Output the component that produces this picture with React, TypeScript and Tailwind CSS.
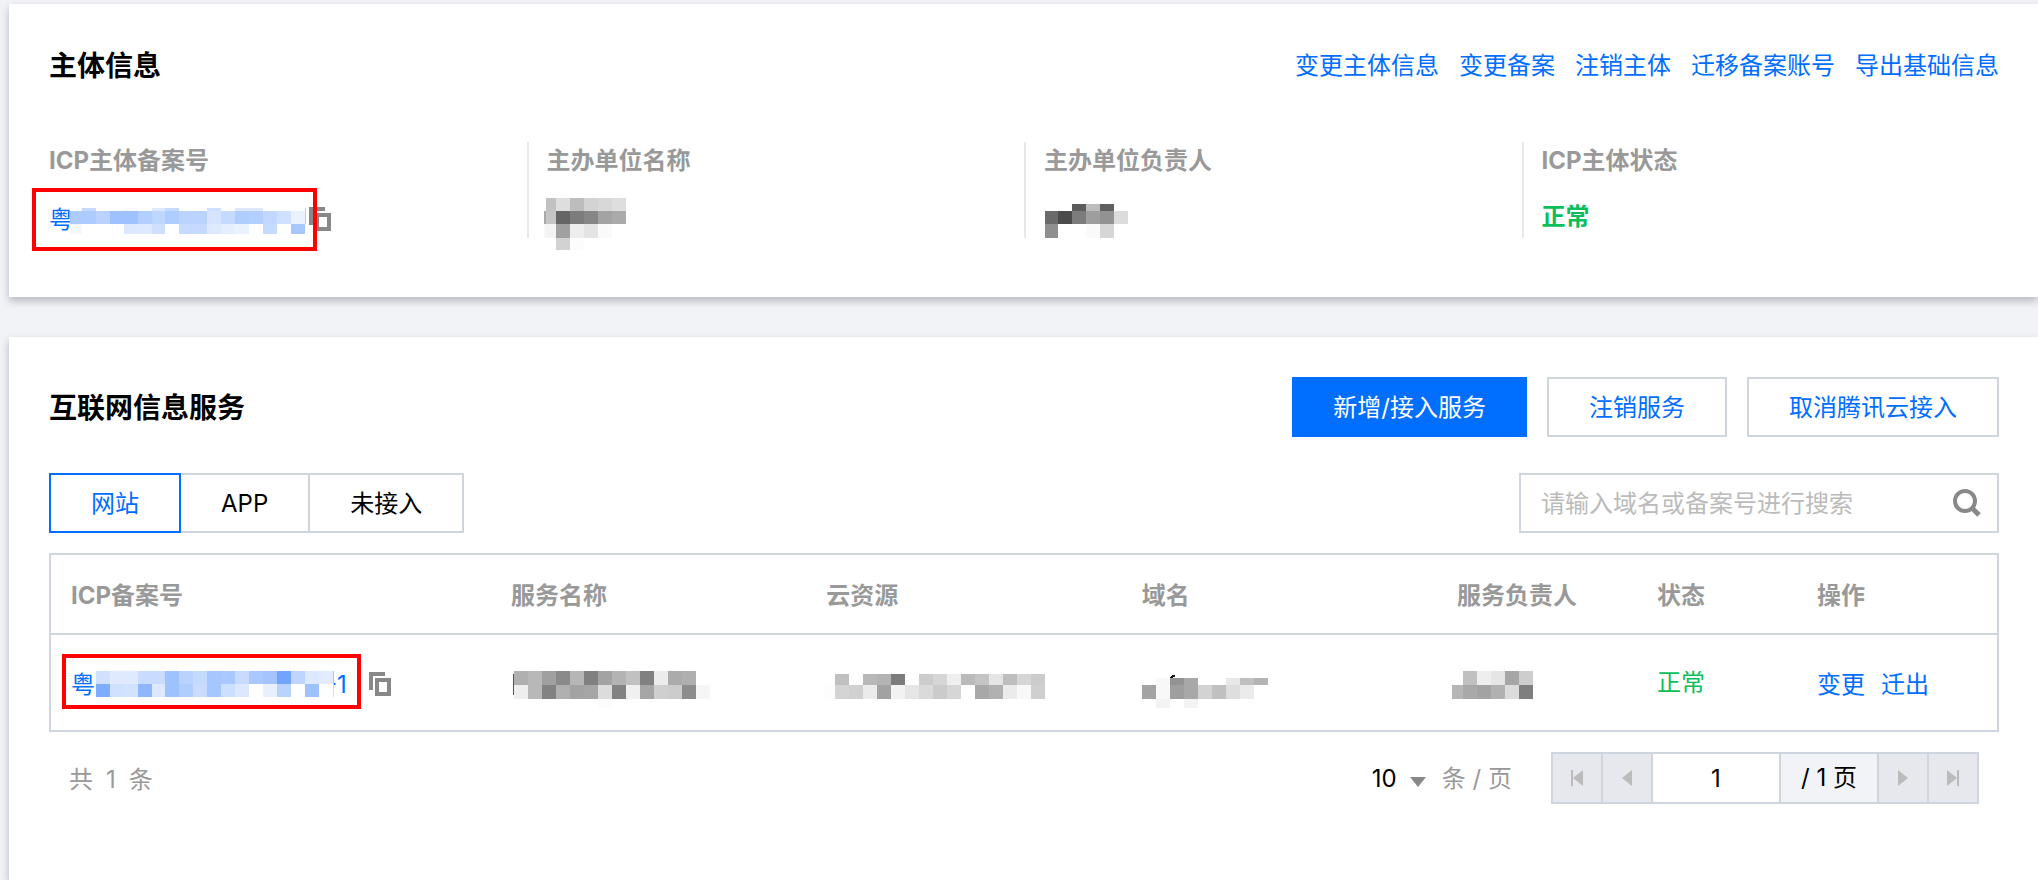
import { useState, type ReactNode } from "react";

type Cells = (string | null)[][];

interface MosaicProps {
  xs: number[];
  ys: number[];
  cells: Cells;
  height: number;
  className?: string;
  children?: ReactNode;
}

/* Pixelated block that hides private data. xs / ys are the cell edges. */
function Mosaic({ xs, ys, cells, height, className = "", children }: MosaicProps) {
  const width = xs[xs.length - 1];
  return (
    <svg
      aria-hidden="true"
      width={width}
      height={height}
      viewBox={`0 0 ${width} ${height}`}
      shapeRendering="crispEdges"
      className={`block shrink-0 overflow-visible ${className}`}
    >
      {cells.map((row, r) =>
        row.map((fill, c) =>
          fill ? (
            <rect
              key={`${r}-${c}`}
              x={xs[c]}
              y={ys[r]}
              width={xs[c + 1] - xs[c]}
              height={ys[r + 1] - ys[r]}
              fill={fill}
            />
          ) : null,
        ),
      )}
      {children}
    </svg>
  );
}

const edges = (first: number[], start: number, count: number) => [
  ...first,
  ...Array.from({ length: count + 1 }, (_, i) => start + i * 14),
];

const _ = null;

function CopyButton({ className = "" }: { className?: string }) {
  return (
    <button type="button" aria-label="复制" className={`mt-[2px] shrink-0 cursor-pointer ${className}`}>
      <svg width="22" height="24" viewBox="0 0 22 24" fill="#888888" shapeRendering="crispEdges" className="block">
        <path d="M0 0h16v4H4v14H0z" />
        <path fillRule="evenodd" d="M6 6h16v18H6zM10 10v10h8V10z" />
      </svg>
    </button>
  );
}

function Field({ label, children, divided = true }: { label: string; children: ReactNode; divided?: boolean }) {
  return (
    <div className={`min-h-[95px] px-[18px] border-l-2 ${divided ? "border-[#e7e8ee]" : "border-transparent"}`}>
      <dt className="font-bold leading-[38px] text-[#999999]">{label}</dt>
      <dd className="mt-[18px]">{children}</dd>
    </div>
  );
}

const subjectLinks = ["变更主体信息", "变更备案", "注销主体", "迁移备案账号", "导出基础信息"];
const tabs = ["网站", "APP", "未接入"];

function SubjectCard() {
  return (
    <section className="bg-white pl-10 pr-[39px] pt-10 pb-[59px] shadow-[0_4px_8px_rgba(54,58,80,0.32)]">
      <header className="flex flex-wrap items-center justify-between gap-4">
        <h2 className="text-[28px] leading-[44px] font-bold">主体信息</h2>
        <nav className="flex flex-wrap gap-5 text-[#006eff]">
          {subjectLinks.map((t) => (
            <a key={t} href="#">{t}</a>
          ))}
        </nav>
      </header>
      <dl className="-mx-5 mt-[54px] grid grid-cols-4">
        <Field label="ICP主体备案号" divided={false}>
          <div className="relative flex h-10 items-center">
            <a href="#" className="flex items-center text-[#006eff]">
              <span className="pt-1">粤</span>
              <Mosaic
                className="-ml-[3px] bg-white"
                height={40}
                xs={[0, 12, 26, 40, 54, 68, 82, 95, 109, 123, 137, 151, 165, 179, 193, 207, 221, 235]}
                ys={[10, 13, 26, 36]}
                cells={[
                  [_, "#c5d9ff", _, _, "#f8faff", _, "#dce8ff", "#c5daff", _, _, "#cfe0ff", _, "#dce8ff", "#dce8ff"],
                  ["#aecbff", "#aecbff", "#b9d2ff", "#9ec1ff", "#9ec1ff", "#b3cfff", "#bfd6ff", "#b0cdff", "#bbd3ff", "#bbd3ff", "#d5e5ff", "#c5daff", "#b0cdff", "#b3cfff", "#c2d8ff", "#d0e1ff", "#ebf2ff"],
                  ["#f5f8ff", _, _, _, "#dce8ff", "#dde9ff", "#cfe0ff", _, "#c5daff", "#c5daff", "#dce9ff", "#e5eeff", "#ebf2ff", _, "#c5daff", _, "#a6c8ff"],
                ]}
              >
                <rect x="235" y="10" width="1" height="16" fill="#cccccc" />
              </Mosaic>
            </a>
            <CopyButton className="ml-1" />
            <span aria-hidden="true" className="pointer-events-none absolute -top-[10px] -left-[17px] h-[63px] w-[285px] border-4 border-[#ff0000]" />
          </div>
        </Field>
        <Field label="主办单位名称">
          <Mosaic
            className="-ml-[3px]"
            height={36}
            xs={[0, 2, 12, 26, 40, 54, 68, 82]}
            ys={[0, 13, 26, 40, 52]}
            cells={[
              [_, "#c2c2c2", "#dedede", "#bdbdbd", "#d3d3d3", "#d8d8d8", "#dedede"],
              ["#a8a8a8", "#c5c5c5", "#656565", "#7c7c7c", "#868686", "#a3a3a3", "#aaaaaa"],
              ["#f8f8f8", "#f3f3f3", "#a0a0a0", "#eeeeee", "#e4e4e4", "#fafafa"],
              [_, _, "#d2d2d2", "#fcfcfc"],
            ]}
          />
        </Field>
        <Field label="主办单位负责人">
          <Mosaic
            className="ml-px"
            height={36}
            xs={[0, 13, 27, 41, 55, 69, 83]}
            ys={[6, 13, 26, 40]}
            cells={[
              [_, _, "#5c5c5c", "#bcbcbc", "#5f5f5f"],
              ["#6a6a6a", "#4b4b4b", "#7c7c7c", "#9e9e9e", "#929292", "#dcdcdc"],
              ["#8f8f8f", _, _, "#fafafa", "#d6d6d6"],
            ]}
          />
        </Field>
        <Field label="ICP主体状态">
          <p className="font-bold leading-[38px] text-[#0abf5b]">正常</p>
        </Field>
      </dl>
    </section>
  );
}

function ServiceTable() {
  const th = "h-20 border-b-2 border-[#cfd5de] px-5 pt-1 text-left font-bold text-[#999999]";
  const td = "h-[95px] px-5 align-middle";
  return (
    <table className="mt-5 w-full table-fixed border-separate border-spacing-0 border-2 border-[#cfd5de]">
      <thead>
        <tr>
          <th className={`${th} w-[440px]`}>ICP备案号</th>
          <th className={th}>服务名称</th>
          <th className={th}>云资源</th>
          <th className={th}>域名</th>
          <th className={`${th} w-[200px]`}>服务负责人</th>
          <th className={`${th} w-[160px]`}>状态</th>
          <th className={`${th} w-[200px]`}>操作</th>
        </tr>
      </thead>
      <tbody>
        <tr>
          <td className={td}>
            <div className="relative flex h-[50px] items-center">
              <a href="#" className="flex items-center text-[#006eff]">
                <span className="pt-1">粤</span>
                <Mosaic
                  className="relative z-10 ml-px bg-white"
                  height={30}
                  xs={[0, 14, 28, 42, 56, 69, 83, 97, 111, 125, 139, 153, 167, 181, 195, 209, 223, 237, 238]}
                  ys={[3, 16, 29]}
                  cells={[
                    ["#d0e1ff", "#e0eaff", "#e0eaff", "#c9dcff", "#c9dcff", "#9ec1ff", "#b9d2ff", "#c5daff", "#a6c6ff", "#a8c8ff", "#c8dbff", "#a8c8ff", "#a3c4ff", "#70a4ff", "#bdd5ff", "#dce9ff", "#e3ecff", "#a6c6ff"],
                    ["#7dadff", "#d0e1ff", "#d2e3ff", "#8fb7ff", "#dce8ff", "#9ec1ff", "#b0cdff", "#c9dcff", "#a6c6ff", "#cddfff", "#dce8ff", _, "#e8f0ff", "#b9d2ff", _, "#9ec1ff", _, "#d0e1ff"],
                  ]}
                />
                <span className="-ml-2 pt-1">-1</span>
              </a>
              <CopyButton className="ml-[22px]" />
              <span aria-hidden="true" className="pointer-events-none absolute -top-1 -left-[9px] h-[55px] w-[299px] border-4 border-[#ff0000]" />
            </div>
          </td>
          <td className={td}>
            <Mosaic
              className="ml-[2px]"
              height={50}
              xs={edges([], 1, 14)}
              ys={[13, 27, 41, 50]}
              cells={[
                ["#b0b0b0", "#b8b8b8", "#a0a0a0", "#8a8a8a", "#b6b6b6", "#808080", "#a3a3a3", "#b3b3b3", "#c1c1c1", "#808080", "#ececec", "#ababab", "#afafaf"],
                ["#eeeeee", "#b8b8b8", "#828282", "#b0b0b0", "#a3a3a3", "#a6a6a6", "#dcdcdc", "#828282", "#f0f0f0", "#a6a6a6", "#cfcfcf", "#cccccc", "#8c8c8c", "#f6f6f6"],
                [_, _, _, _, _, _, "#fcfcfc"],
              ]}
            >
              <rect x="0" y="16" width="1" height="21" fill="#555555" />
            </Mosaic>
          </td>
          <td className={td}>
            <Mosaic
              className="-ml-[2px]"
              height={50}
              xs={edges([0], 11, 15)}
              ys={[16, 27, 41]}
              cells={[
                [_, "#c0c0c0", _, "#b8b8b8", "#b3b3b3", "#7c7c7c", _, "#cccccc", "#d6d6d6", "#efefef", "#bababa", "#c4c4c4", "#e5e5e5", "#bebebe", "#d6d6d6", "#cccccc"],
                ["#fdfdfd", "#d4d4d4", "#d0d0d0", "#ebebeb", "#a2a2a2", "#f2f2f2", "#e5e5e5", "#dadada", "#cbcbcb", "#d6d6d6", _, "#a8a8a8", "#b1b1b1", "#ebebeb", "#f8f8f8", "#cfcfcf"],
              ]}
            />
          </td>
          <td className={td}>
            <Mosaic
              height={50}
              xs={edges([], 0, 9)}
              ys={[20, 27, 41, 50]}
              cells={[
                [_, "#f8f8f8", "#929292", "#a8a8a8", _, _, "#e8e8e8", "#c0c0c0", "#b4b4b4"],
                ["#a3a3a3", "#f8f8f8", "#9e9e9e", "#a8a8a8", "#d3d3d3", "#c0c0c0", "#dedede", "#ebebeb"],
                [_, "#f3f3f3", _, "#f3f3f3"],
              ]}
            >
              <path d="M28 20v-1l2-2h3v2h-2v1z" fill="#111111" />
            </Mosaic>
          </td>
          <td className={td}>
            <Mosaic
              className="-ml-[5px]"
              height={50}
              xs={edges([0], 11, 5)}
              ys={[13, 27, 41]}
              cells={[
                [_, "#c0c0c0", "#eeeeee", "#e5e5e5", "#a6a6a6", "#cdcdcd"],
                ["#b6b6b6", "#a9a9a9", "#a3a3a3", "#b1b1b1", "#dcdcdc", "#7f7f7f"],
              ]}
            />
          </td>
          <td className={`${td} text-[#0abf5b]`}>正常</td>
          <td className={td}>
            <div className="flex gap-4 pt-1 text-[#006eff]">
              <a href="#">变更</a>
              <a href="#">迁出</a>
            </div>
          </td>
        </tr>
      </tbody>
    </table>
  );
}

function PageButton({ label, d, x }: { label: string; d: string; x?: number }) {
  return (
    <button
      type="button"
      aria-label={label}
      className="-ml-[2px] flex h-[52px] w-[52px] items-center justify-center border-2 border-[#cfd5de] bg-[#e7e8ee] first:ml-0"
    >
      <svg width="12" height="16" viewBox="0 0 12 16" fill="#bbbbbb" className="block overflow-visible">
        <path d={d} />
        {x !== undefined && <rect x={x} y="0" width="2" height="16" />}
      </svg>
    </button>
  );
}

function Pagination() {
  const [page, setPage] = useState("1");
  return (
    <footer className="mt-5 flex flex-wrap items-center justify-between gap-4 px-5">
      <p className="flex gap-[13px] pt-1 text-[#999999]">
        <span>共</span>
        <span>1</span>
        <span>条</span>
      </p>
      <div className="flex flex-wrap items-center">
        <label className="flex items-center pt-[2px] text-[#999999]">
          <span className="relative flex items-center">
            <select aria-label="每页条数" defaultValue="10" className="w-[70px] appearance-none bg-transparent pl-4 text-black outline-none">
              <option>10</option>
              <option>20</option>
              <option>50</option>
            </select>
            <svg width="16" height="10" viewBox="0 0 16 10" fill="#888888" className="pointer-events-none absolute top-4 right-0">
              <path d="M0 0h16L8 10z" />
            </svg>
          </span>
          <span className="ml-4">条 / 页</span>
        </label>
        <div className="ml-[39px] flex">
          <PageButton label="首页" d="M12 0v16L2 8z" x={0} />
          <PageButton label="上一页" d="M11 0v16L1 8z" />
          <input
            aria-label="页码"
            value={page}
            onChange={(e) => setPage(e.target.value)}
            className="-ml-[2px] h-[52px] w-[130px] border-2 border-[#cfd5de] bg-white text-center outline-none"
          />
          <span className="-ml-[2px] flex h-[52px] w-[100px] items-center justify-center border-2 border-[#cfd5de] bg-[#f2f3f7]">
            / 1 页
          </span>
          <PageButton label="下一页" d="M1 0v16l10-8z" />
          <PageButton label="末页" d="M0 0v16l10-8z" x={10} />
        </div>
      </div>
    </footer>
  );
}

function ServicesCard() {
  const [active, setActive] = useState("网站");
  const outline = "h-[60px] cursor-pointer border-2 border-[#cfd5de] bg-white px-10 pt-[2px] text-[#006eff]";
  return (
    <section className="mt-10 grow bg-white pt-10 pr-[39px] pb-16 pl-10 shadow-[0_4px_8px_rgba(54,58,80,0.32)]">
      <header className="flex flex-wrap items-center justify-between gap-4">
        <h2 className="pt-[2px] text-[28px] leading-[44px] font-bold">互联网信息服务</h2>
        <div className="flex flex-wrap gap-5">
          <button type="button" className="h-[60px] cursor-pointer bg-[#006eff] px-[41px] pt-[2px] text-white">
            新增/接入服务
          </button>
          <button type="button" className={outline}>注销服务</button>
          <button type="button" className={outline}>取消腾讯云接入</button>
        </div>
      </header>
      <div className="mt-9 flex flex-wrap items-center justify-between gap-4">
        <div role="tablist" className="flex">
          {tabs.map((t) => (
            <button
              key={t}
              type="button"
              role="tab"
              aria-selected={t === active}
              onClick={() => setActive(t)}
              className={`-ml-[2px] h-[60px] cursor-pointer border-2 px-10 pt-[2px] first:ml-0 ${
                t === active ? "relative border-[#006eff] text-[#006eff]" : "border-[#cfd5de]"
              }`}
            >
              {t}
            </button>
          ))}
        </div>
        <form role="search" className="flex h-[60px] w-[480px] items-center border-2 border-[#cfd5de] bg-white pr-4 pl-5">
          <input
            type="text"
            aria-label="搜索"
            placeholder="请输入域名或备案号进行搜索"
            className="min-w-0 grow bg-transparent pt-[2px] outline-none placeholder:text-[#bbbbbb]"
          />
          <button type="button" aria-label="搜索" className="shrink-0 cursor-pointer">
            <svg width="28" height="28" viewBox="0 0 28 28" fill="none" stroke="#888888" className="block">
              <circle cx="12" cy="12" r="10" strokeWidth="4" />
              <path d="M19 19l7 7" strokeWidth="5" />
            </svg>
          </button>
        </form>
      </div>
      <ServiceTable />
      <Pagination />
    </section>
  );
}

export default function App() {
  return (
    <main className="flex min-h-screen flex-col overflow-hidden bg-[#f2f3f7] pt-1 pl-[9px] font-['Inter','Noto_Sans_CJK_SC',sans-serif] text-2xl leading-9 text-black">
      <SubjectCard />
      <ServicesCard />
    </main>
  );
}
